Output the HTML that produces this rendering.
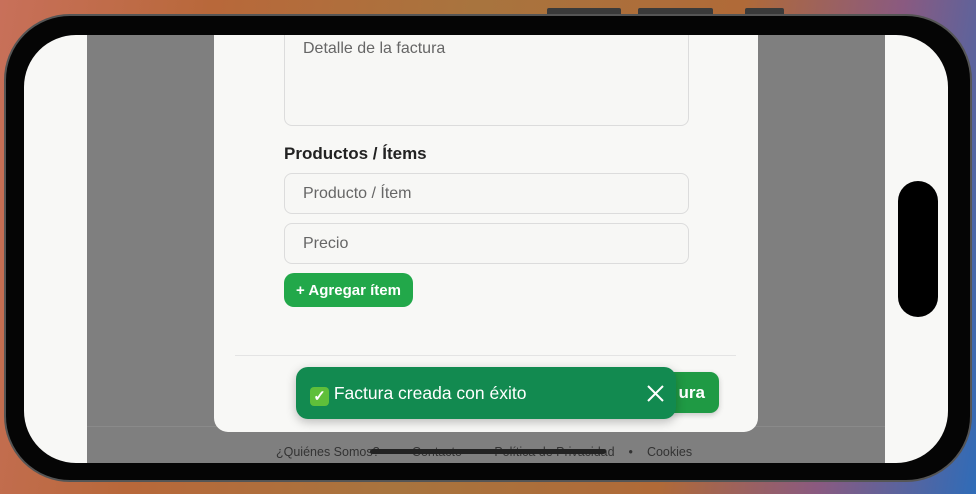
<!DOCTYPE html>
<html><head><meta charset="utf-8"><style>
*{margin:0;padding:0;box-sizing:border-box}
body{width:976px;height:494px;overflow:hidden;position:relative;font-family:"Liberation Sans",sans-serif;
background:linear-gradient(100deg,#c8705a 0%,#b8683a 20%,#a8743e 45%,#b06a38 70%,#8a5a80 85%,#2f6cb8 100%)}
.bump{position:absolute;top:8px;height:10px;background:#3a3a3a;border-radius:2px}
.phone{position:absolute;left:4px;top:14px;width:968px;height:468px;background:#050505;border-radius:66px;border:2px solid #555}
.screen{position:absolute;left:24px;top:35px;width:924px;height:428px;background:#f8f8f6;border-radius:52px;overflow:hidden}
.gray{position:absolute;left:63px;top:0;width:798px;height:428px;background:#7f7f7f}
.footline{position:absolute;left:63px;top:391px;width:798px;height:1px;background:#8a8a8a}
.foot{position:absolute;left:252px;top:410px;font-size:12.5px;color:#333;white-space:nowrap}
.foot b{font-weight:normal;margin:0 14px}
.modal{position:absolute;left:190px;top:-20px;width:544px;height:417px;background:#f8f8f6;border-radius:14px}
.field{position:absolute;left:70px;width:405px;border:1px solid #dcdcdc;border-radius:8px;background:#f7f7f5;font-size:16px;color:#666;padding-left:18px}
.island{position:absolute;left:874px;top:146px;width:40px;height:136px;background:#000;border-radius:20px}
.home{position:absolute;left:346px;top:414px;width:236px;height:5px;background:#222;border-radius:3px}
</style></head><body>
<div class="bump" style="left:547px;width:74px"></div>
<div class="bump" style="left:638px;width:75px"></div>
<div class="bump" style="left:745px;width:39px"></div>
<div class="phone"></div>
<div class="screen">
 <div class="gray"></div>
 <div class="footline"></div>
 <div class="foot">¿Quiénes Somos?<b>•</b>Contacto<b>•</b>Política de Privacidad<b>•</b>Cookies</div>
 <div class="modal">
  <div class="field" style="top:0;height:111px;padding-top:24px">Detalle de la factura</div>
  <div style="position:absolute;left:70px;top:129px;font-size:17px;font-weight:bold;color:#222">Productos / Ítems</div>
  <div class="field" style="top:158px;height:41px;line-height:40px">Producto / Ítem</div>
  <div class="field" style="top:208px;height:41px;line-height:40px">Precio</div>
  <div style="position:absolute;left:70px;top:258px;width:129px;height:34px;background:#22a84a;border-radius:10px;color:#fff;font-weight:bold;font-size:15px;line-height:35px;text-align:center">+ Agregar ítem</div>
  <div style="position:absolute;left:21px;top:340px;width:501px;height:1px;background:#e4e4e4"></div>
  <div style="position:absolute;left:386px;top:357px;width:119px;height:41px;background:#1f9a44;border-radius:9px;color:#fff;font-weight:bold;font-size:17px;line-height:42px;text-align:right;padding-right:14px;box-shadow:0 2px 6px rgba(0,0,0,.2)">ura</div>
 </div>
 <div style="position:absolute;left:272px;top:332px;width:380px;height:52px;background:#128a50;border-radius:12px;box-shadow:0 3px 10px rgba(0,0,0,.25);color:#fff;font-size:17.5px;line-height:52px;padding-left:14px">
  <span style="display:inline-block;width:19px;height:19px;background:#5fbf3a;border-radius:4px;vertical-align:-2px;color:#fff;font-size:15px;line-height:19px;text-align:center;font-weight:bold">✓</span>&nbsp;Factura creada con éxito
  <svg style="position:absolute;left:351px;top:18px" width="17" height="17" viewBox="0 0 17 17"><path d="M1 1L16 16M16 1L1 16" stroke="#fff" stroke-width="2"/></svg>
 </div>
 <div class="island"></div>
 <div class="home"></div>
</div>
</body></html>
